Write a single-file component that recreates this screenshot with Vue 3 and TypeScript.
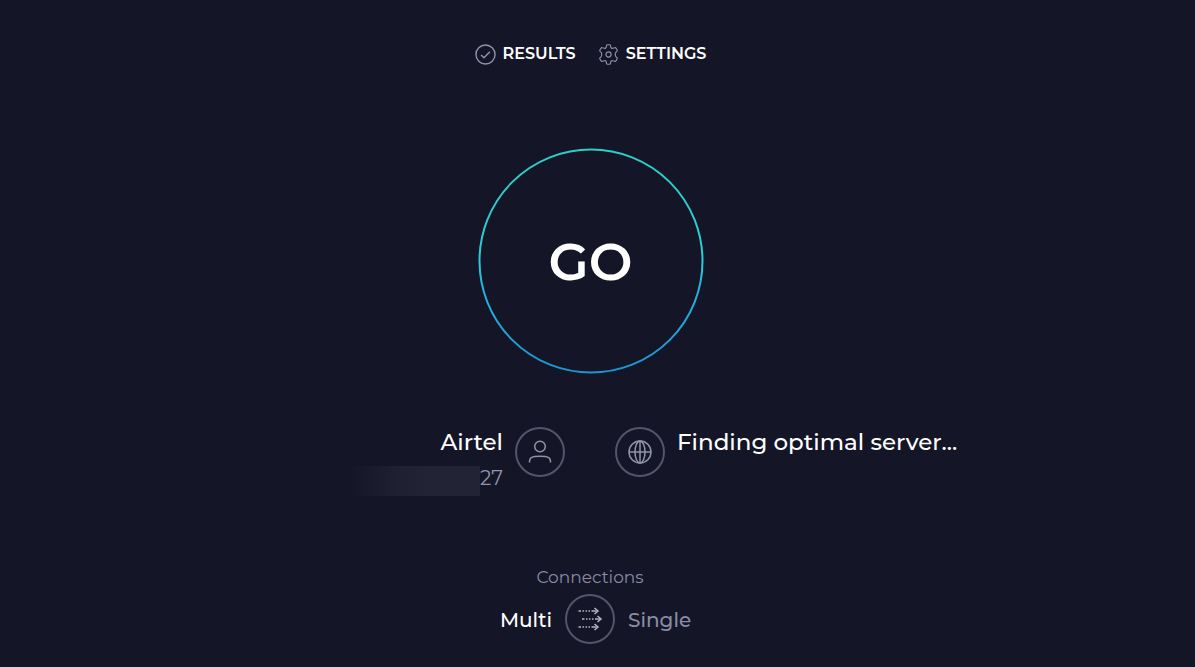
<script setup lang="ts">
import { ref } from 'vue'

type Mode = 'multi' | 'single'

const provider = 'Airtel'
const addressTail = '27'
const serverStatus = 'Finding optimal server...'
const mode = ref<Mode>('multi')

function toggleMode(): void {
  mode.value = mode.value === 'multi' ? 'single' : 'multi'
}
</script>

<template>
  <main class="page">
    <nav class="nav" aria-label="Main">
      <a class="nav-link" href="#results">
        <svg class="nav-icon" viewBox="0 0 22 22" aria-hidden="true">
          <circle cx="11" cy="11" r="10" />
          <path d="M6.3 11.4l3.1 3.1 6.200-6.500" />
        </svg>
        <span>RESULTS</span>
      </a>
      <a class="nav-link" href="#settings">
        <svg class="nav-icon gear" viewBox="0 0 22 22" aria-hidden="true">
          <circle cx="11" cy="11" r="2.7" />
          <path
            d="M10 .8h2c.6 0 1 .4 1.100 1l.3 1.600c.2.900 1 1.400 1.900 1.100l2.200-.6c.5-.2 1.100 0 1.400.5l1.100 1.900c.3.5.2 1.100-.2 1.500l-1.100 1c-.8.700-.8 3.700 0 4.400l1.100 1c.4.4.5 1 .2 1.500l-1.100 1.900c-.3.5-.9.7-1.400.5l-2.200-.6c-.9-.3-1.700.2-1.900 1.100l-.3 1.600c-.1.6-.5 1-1.100 1h-2c-.6 0-1-.4-1.100-1l-.3-1.600c-.2-.9-1-1.400-1.900-1.100l-2.200.6c-.5.2-1.100 0-1.400-.5l-1.100-1.900c-.3-.5-.2-1.100.2-1.500l1.100-1c.8-.7.8-3.700 0-4.400l-1.100-1c-.4-.4-.5-1-.2-1.500l1.100-1.900c.3-.5.9-.7 1.400-.5l2.200.6c.9.300 1.700-.2 1.900-1.100l.3-1.600c.1-.6.5-1 1.100-1z"
          />
        </svg>
        <span>SETTINGS</span>
      </a>
    </nav>

    <button class="go" type="button">
      <svg class="go-ring" viewBox="0 0 226 226" aria-hidden="true">
        <defs>
          <linearGradient id="ring" x1="0" y1="0" x2="0" y2="1">
            <stop offset="0" stop-color="#2bcfc8" />
            <stop offset="0.5" stop-color="#2bcbd6" />
            <stop offset="0.65" stop-color="#22b0e0" />
            <stop offset="1" stop-color="#1d95d0" />
          </linearGradient>
        </defs>
        <circle cx="113" cy="113" r="111.5" fill="none" stroke="url(#ring)" stroke-width="2" />
      </svg>
      <span class="go-label">GO</span>
    </button>

    <section class="hosts" aria-label="Connection details">
      <div class="host host-client">
        <div class="host-text">
          <div class="host-name">{{ provider }}</div>
          <div class="address"><span class="mask"></span><span>{{ addressTail }}</span></div>
        </div>
        <svg class="badge" viewBox="0 0 50 50" aria-hidden="true">
          <circle class="rim" cx="25" cy="25" r="24" />
          <circle cx="25" cy="19.500" r="5.300" />
          <path d="M14.500 35.500v-1c0-3 2.200-4.500 5.200-4.900 3.500-.4 7.100-.4 10.600 0 3 .4 5.200 1.900 5.200 4.900v1" />
        </svg>
      </div>
      <div class="host">
        <svg class="badge" viewBox="0 0 50 50" aria-hidden="true">
          <circle class="rim" cx="25" cy="25" r="24" />
          <circle cx="25" cy="25" r="11" />
          <ellipse cx="25" cy="25" rx="5" ry="11" />
          <path d="M14 25h22M25 14v22" />
        </svg>
        <div class="host-text">
          <div class="host-name">{{ serverStatus }}</div>
        </div>
      </div>
    </section>

    <section class="connections" aria-labelledby="connections-title">
      <h2 id="connections-title" class="connections-title">Connections</h2>
      <div class="modes">
        <button class="mode mode-multi" :class="{ active: mode === 'multi' }" type="button" @click="mode = 'multi'">
          Multi
        </button>
        <button class="switch" type="button" aria-label="Switch connection mode" @click="toggleMode">
          <svg class="badge" viewBox="0 0 50 50" aria-hidden="true">
            <circle class="rim" cx="25" cy="25" r="24" />
            <g class="dashes">
              <path d="M13.500 17h2.500M17.500 17h1.500M20.500 17h1.500M23.500 17h1.500M26.500 17h5" />
              <path d="M17 25h2.500M21 25h1.500M24 25h1.500M27 25h1.500M30 25h5" />
              <path d="M13.500 33h2.500M17.500 33h1.500M20.500 33h1.500M23.500 33h1.500M26.500 33h5" />
              <path d="M29.500 14l3.500 3-3.500 3M32.500 22l3.500 3-3.500 3M29.500 30l3.500 3-3.500 3" />
            </g>
          </svg>
        </button>
        <button class="mode" :class="{ active: mode === 'single' }" type="button" @click="mode = 'single'">
          Single
        </button>
      </div>
    </section>
  </main>
</template>

<style>
body {
  margin: 0;
  background: #141526;
}
</style>

<style scoped>
.page {
  box-sizing: border-box;
  min-height: 100vh;
  padding: 42px 14px 20px 0;
  display: flex;
  flex-direction: column;
  align-items: center;
  background: #141526;
  color: #fff;
  font-family: Montserrat, Inter, sans-serif;
  font-weight: 500;
}

button {
  padding: 0;
  border: 0;
  background: none;
  color: inherit;
  font: inherit;
  cursor: pointer;
}

svg {
  display: block;
  flex: none;
  fill: none;
  stroke: #9193a8;
  stroke-width: 1.5;
}

.nav {
  display: flex;
  gap: 22px;
}

.nav-link {
  display: flex;
  align-items: center;
  gap: 7px;
  color: #fff;
  font-size: 16px;
  line-height: 24px;
  font-weight: 600;
  text-decoration: none;
}

.nav-icon {
  width: 21px;
  height: 21px;
}

.gear {
  stroke-width: 1.2;
}

.go {
  display: grid;
  place-items: center;
  margin-top: 82px;
  border-radius: 50%;
  font-size: 52px;
  line-height: 60px;
  font-weight: 600;
}

.go > * {
  grid-area: 1 / 1;
}

.go-label {
  padding-top: 2px;
}

.go-ring {
  width: 226px;
  height: 226px;
}

.hosts {
  align-self: stretch;
  display: grid;
  grid-template-columns: 1fr 1fr;
  gap: 50px;
  margin-top: 53px;
  padding-right: 1px;
}

.host {
  display: flex;
  gap: 12px;
}

.host-client {
  justify-content: flex-end;
  text-align: right;
}

.host-name {
  font-size: 23px;
  line-height: 30px;
}

.address {
  display: flex;
  justify-content: flex-end;
  margin-top: 9px;
  color: #9193ab;
  font-size: 20px;
  line-height: 24px;
  font-weight: 400;
}

.mask {
  width: 132px;
  height: 30px;
  background: linear-gradient(90deg, #141526, #1e2031 35%, #222436 60%, #222436);
}

.badge {
  width: 50px;
  height: 50px;
}

.rim {
  stroke: #53556a;
  stroke-width: 2;
}

.connections {
  align-self: stretch;
  margin-top: 71px;
  padding-right: 1px;
}

.connections-title {
  margin: 0 0 7px;
  color: #8a8ca6;
  font-size: 17px;
  line-height: 20px;
  font-weight: 400;
  text-align: center;
}

.modes {
  display: grid;
  grid-template-columns: 1fr auto 1fr;
  align-items: center;
  gap: 13px;
}

.mode {
  justify-self: start;
  padding-top: 2px;
  color: #8a8ca6;
  font-size: 20px;
  line-height: 28px;
}

.mode-multi {
  justify-self: end;
}

.mode.active {
  color: #fff;
}

.dashes {
  stroke: #b4b6c6;
}
</style>
